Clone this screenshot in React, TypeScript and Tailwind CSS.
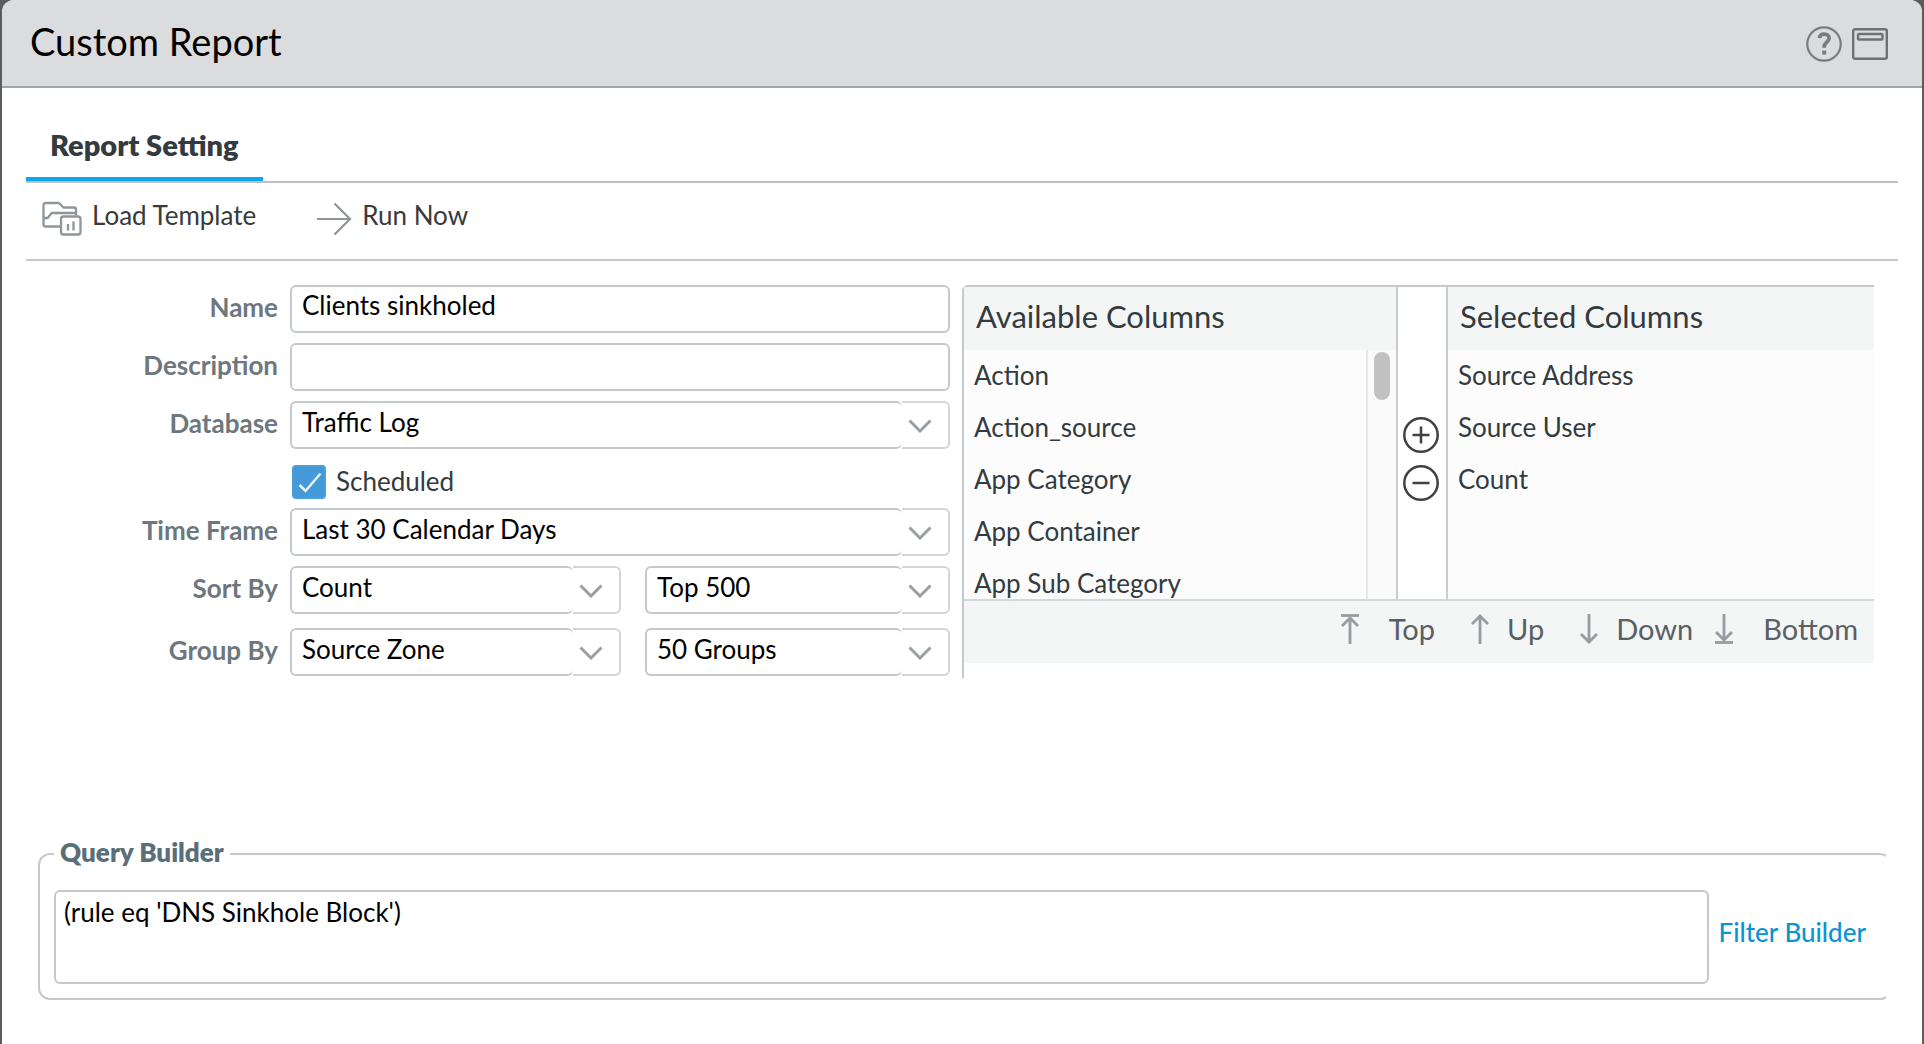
import { useState, type ReactNode } from "react";

function HelpIcon() {
  return (
    <svg width="36" height="36" viewBox="0 0 36 36" fill="none" stroke="#767e84" strokeWidth="2.2">
      <circle cx="18" cy="18" r="16.7" />
      <path d="M13.4 12.2c.2-2.600 2.100-4 4.800-4 3 0 4.900 1.600 4.900 4.100 0 3.500-4.900 4.200-4.900 8.200v1.200" strokeWidth="3.800" />
      <path d="M18.200 24.600v4" strokeWidth="4" />
    </svg>
  );
}

function WindowIcon() {
  return (
    <svg width="36" height="32" viewBox="0 0 36 32" fill="none" stroke="#6d7175" strokeWidth="2.400">
      <rect x="1.200" y="1.200" width="33.600" height="29.600" rx="2" />
      <rect x="6" y="6" width="24.500" height="5.500" rx="1" />
    </svg>
  );
}

function LoadIcon() {
  return (
    <svg width="40" height="36" viewBox="0 0 40 36" fill="none" stroke="#8f9598" strokeWidth="2.300" strokeLinejoin="round">
      <path d="M18 25.500H3.500a2 2 0 0 1-2-2V4a2 2 0 0 1 2-2H17l4.500 4.500H32a2 2 0 0 1 2 2v6" />
      <path d="M1.500 17h4.200l4-5H34" />
      <rect x="19" y="15.500" width="19.500" height="18" rx="2.500" />
      <path d="M26 23v6.500M31.500 20.500v9" />
    </svg>
  );
}

function RunIcon() {
  return (
    <svg width="36" height="36" viewBox="0 0 36 36" fill="none" stroke="#8f9598" strokeWidth="2.200">
      <path d="M1 18h33M18.500 2.500 34 18 18.500 33.500" />
    </svg>
  );
}

function ChevronIcon() {
  return (
    <svg width="24" height="14" viewBox="0 0 24 14" fill="none" stroke="#9a9fa2" strokeWidth="3">
      <path d="M1.500 1.500 12 12 22.500 1.500" />
    </svg>
  );
}

function ArrowIcon({ down = false, bar = false }: { down?: boolean; bar?: boolean }) {
  return (
    <svg
      width="18"
      height="30"
      viewBox="0 0 18 30"
      fill="none"
      stroke="#969c9f"
      strokeWidth="2.800"
      className={down ? "rotate-180" : ""}
    >
      {bar && <path d="M0 1.500h18" />}
      <path d={bar ? "M9 3v27M1 12l8-8 8 8" : "M9 2v28M1 10l8-8 8 8"} />
    </svg>
  );
}

function CircleIcon({ plus = false }: { plus?: boolean }) {
  return (
    <svg width="36" height="36" viewBox="0 0 36 36" fill="none" stroke="#3f4143" strokeWidth="2.500">
      <circle cx="18" cy="18" r="16.700" />
      <path d="M9.500 18h17" />
      {plus && <path d="M18 9.500v17" />}
    </svg>
  );
}

function Row({ id, label, children }: { id: string; label: string; children: ReactNode }) {
  return (
    <div className="flex">
      <label htmlFor={id} className="w-[264px] shrink-0 pr-3 pt-1.5 text-right font-bold text-[#6d777e]">
        {label}
      </label>
      <div className="flex min-w-0 flex-1">{children}</div>
    </div>
  );
}

function TextField({ id, value }: { id: string; value: string }) {
  return (
    <input
      id={id}
      defaultValue={value}
      className="h-12 w-full min-w-0 rounded-md border-2 border-[#c4c9cd] bg-white px-2.5 pb-2 text-black outline-none"
    />
  );
}

function SelectField({ id, label, options }: { id: string; label?: string; options: string[] }) {
  return (
    <div className="grid h-12 min-w-0 flex-1">
      <div className="col-start-1 row-start-1 flex">
        <div className="flex-1 rounded-md border-2 border-r-0 border-[#c4c9cd]" />
        <div className="flex w-12 items-center justify-center rounded-r-md border-2 border-l-0 border-[#d3d6d8] pr-2.5 pt-0.5">
          <ChevronIcon />
        </div>
      </div>
      <select
        id={id}
        aria-label={label}
        className="col-start-1 row-start-1 w-full cursor-pointer appearance-none bg-transparent pb-1.5 pl-3 text-black outline-none"
      >
        {options.map((o) => (
          <option key={o}>{o}</option>
        ))}
      </select>
    </div>
  );
}

const available = ["Action", "Action_source", "App Category", "App Container", "App Sub Category"];
const selected = ["Source Address", "Source User", "Count"];

function ColumnList({ title, items, children }: { title: string; items: string[]; children?: ReactNode }) {
  return (
    <section className="flex h-full flex-col text-[#333b40]">
      <h2 className="h-[63px] bg-[#f4f6f6] pl-3 pt-[9px] text-[31px] leading-10">{title}</h2>
      <div className="flex min-h-0 flex-1 bg-[#fcfcfc]">
        <ul className="min-w-0 flex-1 overflow-hidden pl-2.5">
          {items.map((item) => (
            <li key={item} className="h-[52px] pt-[9px]">
              {item}
            </li>
          ))}
        </ul>
        {children}
      </div>
    </section>
  );
}

export default function App() {
  const [scheduled, setScheduled] = useState(true);
  return (
    <div className="min-h-screen bg-[#5c5c5c] px-0.5 font-[Lato,sans-serif] text-[26px] leading-8">
      <main className="min-h-screen rounded-t-xl bg-white">
        <header className="flex h-22 items-center justify-between rounded-t-xl border-b-2 border-[#a0a5a9] bg-[#dbdcde] pl-7 pr-8.5">
          <h1 className="pb-1 text-[38px] leading-12 text-black">Custom Report</h1>
          <div className="flex items-center gap-2.5 pt-0.5">
            <button aria-label="Help">
              <HelpIcon />
            </button>
            <button aria-label="Restore window">
              <WindowIcon />
            </button>
          </div>
        </header>

        <div className="px-6">
          <nav role="tablist" className="flex h-[95px] items-end border-b-2 border-[#bfbfbf]">
            <button
              role="tab"
              aria-selected="true"
              className="border-b-4 border-[#0aa5ea] px-6 pb-4 text-[29px] font-extrabold text-[#333b40]"
            >
              Report Setting
            </button>
          </nav>

          <div className="flex h-[78px] items-start gap-15 border-b-2 border-[#c4c9cd] pl-4 pt-4 text-[#3a3a3a]">
            <button className="flex items-start gap-2.5">
              <span className="pt-0.5">
                <LoadIcon />
              </span>
              Load Template
            </button>
            <button className="flex items-start gap-2.5">
              <span className="pt-0.5">
                <RunIcon />
              </span>
              Run Now
            </button>
          </div>

          <div className="flex gap-3 pr-6 pt-6">
            <form className="flex w-[924px] shrink-0 flex-col">
              <div className="flex flex-col gap-2.5">
                <Row id="name" label="Name">
                  <TextField id="name" value="Clients sinkholed" />
                </Row>
                <Row id="description" label="Description">
                  <TextField id="description" value="" />
                </Row>
                <Row id="database" label="Database">
                  <SelectField id="database" options={["Traffic Log"]} />
                </Row>
              </div>
              <label className="ml-[266px] flex h-[59px] items-center gap-2.5 pt-1.5 text-[#333b40]">
                <span className="grid size-[34px]">
                  <input
                    type="checkbox"
                    checked={scheduled}
                    onChange={(e) => setScheduled(e.target.checked)}
                    className="col-start-1 row-start-1 size-[34px] appearance-none rounded-sm border-2 border-[#4a9fdb] checked:bg-[#449ad8]"
                  />
                  {scheduled && (
                    <svg viewBox="0 0 34 34" fill="none" stroke="#e8f3fb" strokeWidth="2.500" className="pointer-events-none col-start-1 row-start-1">
                      <path d="M7.500 20l6 6L28.500 8.500" />
                    </svg>
                  )}
                </span>
                <span className="pb-0.5">Scheduled</span>
              </label>
              <div className="flex flex-col gap-2.5">
                <Row id="timeframe" label="Time Frame">
                  <SelectField id="timeframe" options={["Last 30 Calendar Days"]} />
                </Row>
                <Row id="sortby" label="Sort By">
                  <div className="flex w-full gap-6">
                    <div className="flex w-[331px]">
                      <SelectField id="sortby" options={["Count"]} />
                    </div>
                    <SelectField id="sortlimit" label="Sort limit" options={["Top 500"]} />
                  </div>
                </Row>
              </div>
              <div className="pt-3.5">
                <Row id="groupby" label="Group By">
                  <div className="flex w-full gap-6">
                    <div className="flex w-[331px]">
                      <SelectField id="groupby" options={["Source Zone"]} />
                    </div>
                    <SelectField id="grouplimit" label="Group limit" options={["50 Groups"]} />
                  </div>
                </Row>
              </div>
            </form>

            <div className="h-[393px] min-w-0 flex-1 rounded-tl-md border-l-2 border-t-2 border-[#c4c9cd]">
              <div className="flex h-[312px]">
                <div className="min-w-0 flex-1">
                  <ColumnList title="Available Columns" items={available}>
                    <div className="flex w-[30px] justify-center border-l-2 border-[#e6e6e6] bg-[#fafafa] pt-0.5">
                      <div className="h-12 w-4 rounded-full bg-[#c1c1c1]" />
                    </div>
                  </ColumnList>
                </div>
                <div className="flex w-13 flex-col items-center gap-3 border-x-2 border-[#c8cccf] bg-white pr-0.5 pt-[130px]">
                  <button aria-label="Add column">
                    <CircleIcon plus />
                  </button>
                  <button aria-label="Remove column">
                    <CircleIcon />
                  </button>
                </div>
                <div className="w-[426px]">
                  <ColumnList title="Selected Columns" items={selected} />
                </div>
              </div>
              <div className="flex h-16 items-start justify-end border-t-2 border-[#d5d8d9] bg-[#f4f6f6] pr-4 pt-3 text-[29px] text-[#586064]">
                <button className="mr-9 flex items-center gap-[30px]">
                  <ArrowIcon bar />
                  Top
                </button>
                <button className="mr-9 flex items-center gap-4.5">
                  <ArrowIcon />
                  Up
                </button>
                <button className="mr-5.5 flex items-center gap-4.5">
                  <ArrowIcon down />
                  Down
                </button>
                <button className="flex items-center gap-[30px]">
                  <ArrowIcon down bar />
                  Bottom
                </button>
              </div>
            </div>
          </div>

          <div className="ml-3 mr-3 mt-[158px] overflow-hidden">
            <fieldset className="-mr-1.5 rounded-xl border-2 border-[#c4c9cd] pb-3.5 pl-3.5 pr-4 pt-4.5">
              <legend className="px-1.5 pb-1 font-extrabold text-[#5a6e79]">Query Builder</legend>
              <div className="flex items-center gap-2.5">
                <textarea
                  aria-label="Query"
                  defaultValue="(rule eq 'DNS Sinkhole Block')"
                  className="h-[94px] min-w-0 flex-1 resize-none rounded-md border-2 border-[#c4c9cd] px-2 pt-1 text-black outline-none"
                />
                <a href="#filter-builder" className="pb-2.5 pr-2 font-medium text-[#0c93d2]">
                  Filter Builder
                </a>
              </div>
            </fieldset>
          </div>
        </div>
      </main>
    </div>
  );
}
